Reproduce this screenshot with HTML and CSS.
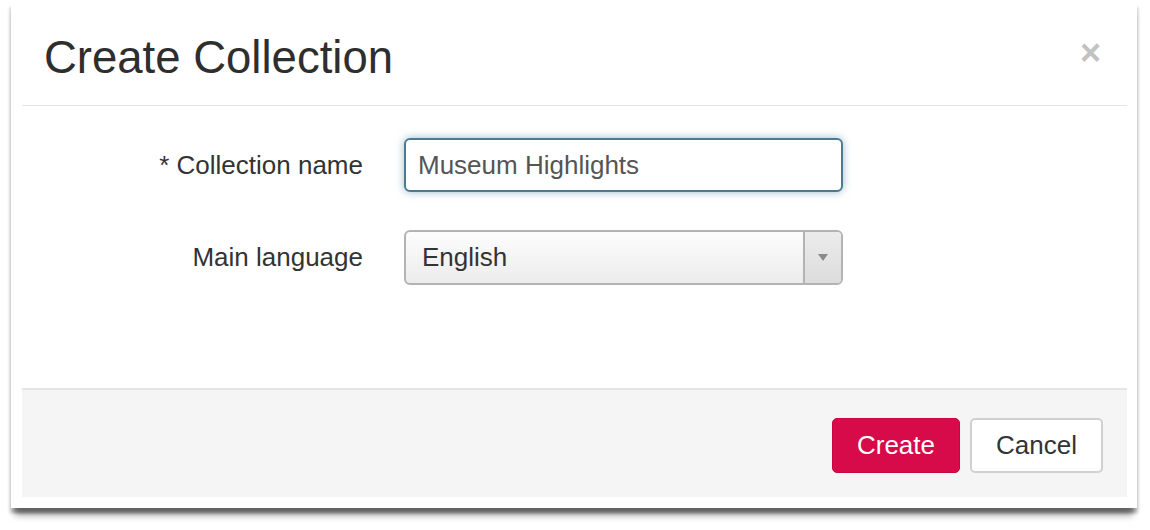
FILE: index.html
```html
<!DOCTYPE html>
<html>
<head>
<meta charset="utf-8">
<link rel="stylesheet" href="styles.css">
</head>
<body>
<div class="panel">
  <div class="modal">
    <div class="modal-header">
      <h1 class="title">Create Collection</h1>
      <span class="close">&times;</span>
    </div>
    <div class="modal-body">
      <div class="row">
        <label class="label">* Collection name</label>
        <div class="input">Museum Highlights</div>
      </div>
      <div class="row">
        <label class="label">Main language</label>
        <div class="select">
          <span class="select-text">English</span>
          <span class="select-arrow"><svg width="12" height="9" viewBox="0 0 12 9"><path d="M1 1 L11 1 L6 8 Z" fill="#8a8a8a"/></svg></span>
        </div>
      </div>
    </div>
    <div class="modal-footer">
      <button class="btn btn-primary">Create</button>
      <button class="btn btn-default">Cancel</button>
    </div>
  </div>
</div>
</body>
</html>
```

FILE: styles.css
```css
html, body {
  margin: 0;
  padding: 0;
  background: #fff;
}
body {
  font-family: "Liberation Sans", Arial, Helvetica, sans-serif;
  color: #333;
  min-height: 530px;
  padding-bottom: 22px;
  box-sizing: border-box;
}
.panel {
  margin-left: 11px;
  width: 1126px;
  height: 508px;
  box-sizing: border-box;
  padding: 0 10px 11px 11px;
  background: #fff;
  box-shadow: 0 11px 7px -4px rgba(0,0,0,0.38), -2px 6px 3px -1px rgba(0,0,0,0.22), 2px 6px 3px -1px rgba(0,0,0,0.22);
  display: flex;
  flex-direction: column;
}
.modal {
  flex: 1;
  display: flex;
  flex-direction: column;
}
.modal-header {
  height: 106px;
  border-bottom: 1px solid #e5e5e5;
  display: flex;
  align-items: center;
  justify-content: space-between;
  padding: 6px 26px 0 22px;
  box-sizing: border-box;
}
.title {
  margin: 0;
  font-size: 45.5px;
  font-weight: normal;
  color: #2e2e2e;
  line-height: 1;
  margin-top: 4px;
}
.close {
  font-size: 36px;
  font-weight: bold;
  color: #c2c2c2;
  line-height: 1;
  margin-top: -6px;
}
.modal-body {
  flex: 1;
  padding-top: 32px;
  box-sizing: border-box;
}
.row {
  display: flex;
  align-items: center;
  margin-bottom: 38px;
}
.label {
  width: 341px;
  text-align: right;
  font-size: 26px;
  color: #333;
  margin-right: 41px;
}
.input {
  width: 439px;
  height: 54px;
  box-sizing: border-box;
  border: 2px solid #4d7a90;
  border-radius: 6px;
  box-shadow: 0 0 8px rgba(70,130,160,0.55);
  font-size: 26px;
  color: #555;
  padding-left: 12px;
  display: flex;
  align-items: center;
  background: #fff;
}
.select {
  width: 439px;
  height: 55px;
  box-sizing: border-box;
  border: 2px solid #b3b3b3;
  border-radius: 6px;
  background: linear-gradient(#fdfdfd, #ececec);
  display: flex;
  align-items: stretch;
  overflow: hidden;
}
.select-text {
  flex: 1;
  font-size: 26px;
  color: #333;
  padding-left: 16px;
  display: flex;
  align-items: center;
}
.select-arrow {
  width: 36px;
  border-left: 2px solid #b3b3b3;
  background: linear-gradient(#ececec, #dcdcdc);
  display: flex;
  align-items: center;
  justify-content: center;
}
.modal-footer {
  height: 109px;
  box-sizing: border-box;
  border-top: 2px solid #e5e5e5;
  background: #f5f5f5;
  display: flex;
  justify-content: flex-end;
  align-items: flex-start;
  padding: 28px 24px 0 0;
  gap: 10px;
}
.btn {
  height: 55px;
  box-sizing: border-box;
  border-radius: 5px;
  font-family: "Liberation Sans", Arial, Helvetica, sans-serif;
  font-size: 26px;
  padding: 0;
  cursor: pointer;
}
.btn-primary {
  width: 128px;
  background: #d70a4a;
  border: 1px solid #c8063f;
  color: #fff;
}
.btn-default {
  width: 133px;
  background: #fff;
  border: 2px solid #d0d0d0;
  color: #333;
}
```
